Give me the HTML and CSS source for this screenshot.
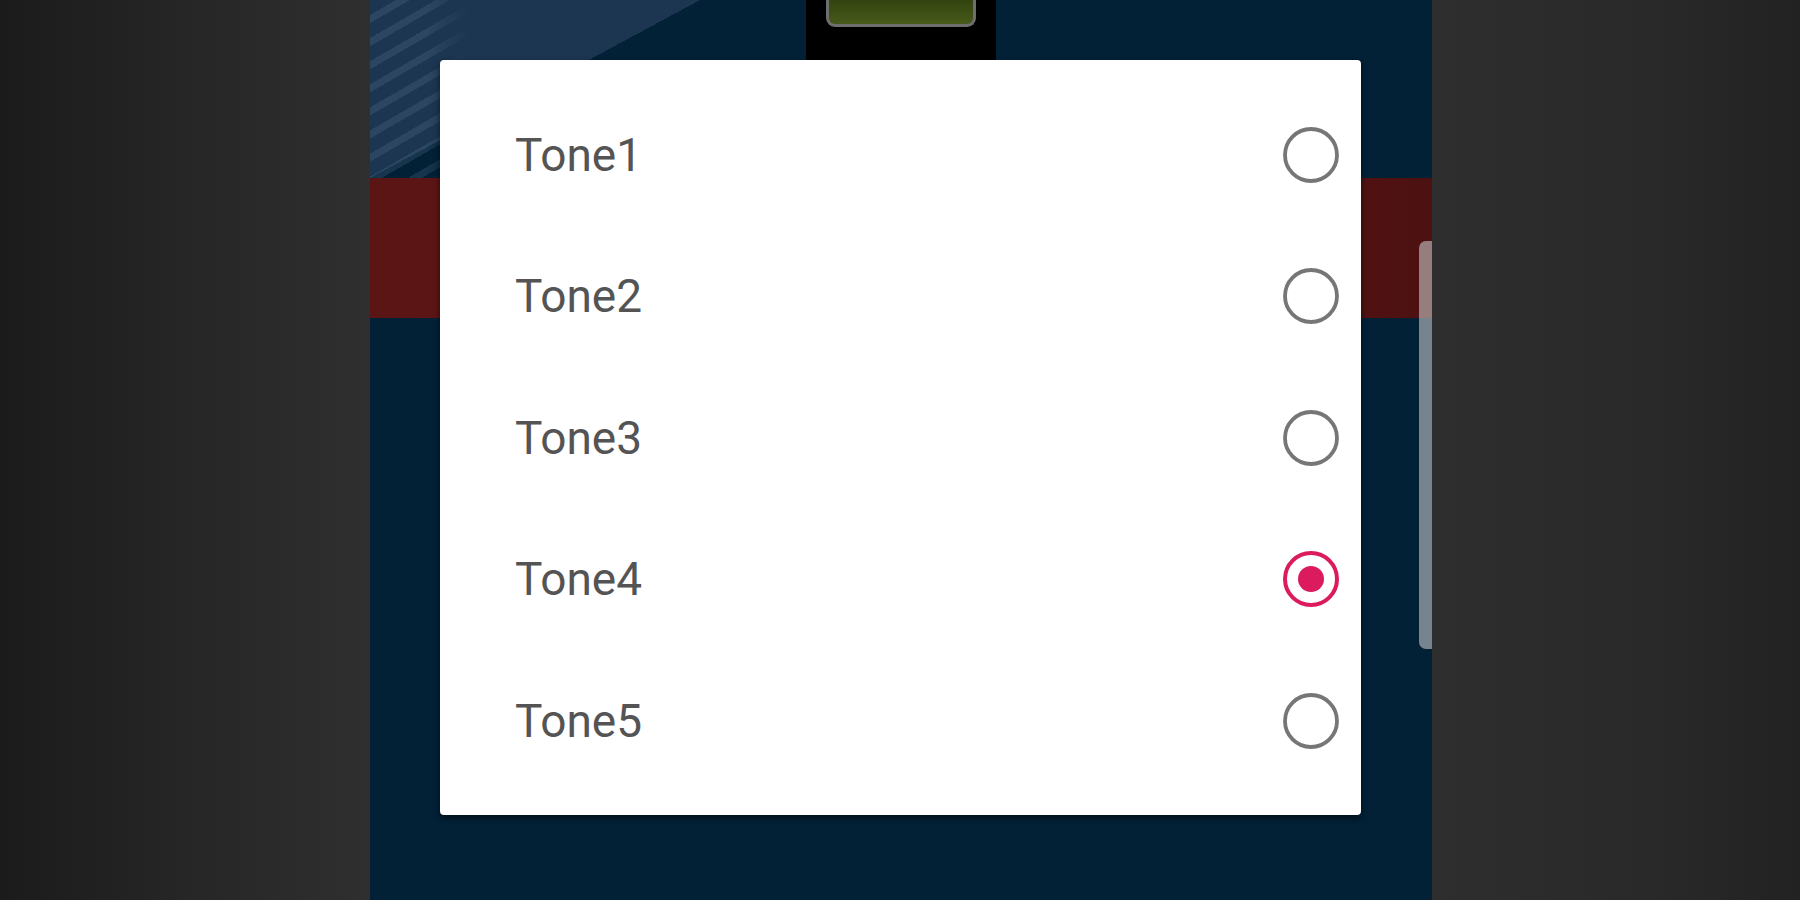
FILE: index.html
```html
<!DOCTYPE html>
<html lang="en">
<head>
<meta charset="utf-8">
<title>Tone picker</title>
<link rel="stylesheet" href="styles.css">
</head>
<body>
<div class="screen">
  <div class="side side-left"></div>
  <div class="phone">
    <div class="header">
      <div class="stripes"></div>
      <div class="camera"><div class="lens"></div></div>
    </div>
    <div class="band"></div>
    <div class="rest"></div>
    <div class="scrollbar"></div>
    <div class="dialog">
      <div class="row"><span class="label">Tone1</span>
        <svg class="radio" viewBox="0 0 60 60"><circle cx="30" cy="30" r="26" fill="none" stroke="#767676" stroke-width="3.8"/></svg></div>
      <div class="row"><span class="label">Tone2</span>
        <svg class="radio" viewBox="0 0 60 60"><circle cx="30" cy="30" r="26" fill="none" stroke="#767676" stroke-width="3.8"/></svg></div>
      <div class="row"><span class="label">Tone3</span>
        <svg class="radio" viewBox="0 0 60 60"><circle cx="30" cy="30" r="26" fill="none" stroke="#767676" stroke-width="3.8"/></svg></div>
      <div class="row"><span class="label">Tone4</span>
        <svg class="radio" viewBox="0 0 60 60"><circle cx="30" cy="30" r="26" fill="none" stroke="#dc1a5e" stroke-width="4"/><circle cx="30" cy="30" r="13" fill="#dc1a5e"/></svg></div>
      <div class="row"><span class="label">Tone5</span>
        <svg class="radio" viewBox="0 0 60 60"><circle cx="30" cy="30" r="26" fill="none" stroke="#767676" stroke-width="3.8"/></svg></div>
    </div>
  </div>
  <div class="side side-right"></div>
</div>
</body>
</html>
```

FILE: styles.css
```css
html, body {
  margin: 0;
  padding: 0;
  width: 1800px;
  height: 900px;
  overflow: hidden;
  background: #242424;
}

.screen {
  display: flex;
  width: 1800px;
  height: 900px;
}

.side {
  height: 900px;
}

.side-left {
  width: 370px;
  background: linear-gradient(to right, #1b1b1b 0%, #262626 50%, #2f2f2f 100%);
}

.side-right {
  width: 368px;
  background: linear-gradient(to right, #2e2e2e 0%, #292929 60%, #222222 100%);
}

.phone {
  position: relative;
  width: 1062px;
  height: 900px;
  background: #022036;
  display: flex;
  flex-direction: column;
}

.header {
  position: relative;
  height: 178px;
  display: flex;
  justify-content: center;
  background:
    linear-gradient(to bottom right, #1c3550 50%, rgba(28, 53, 80, 0) 50%) 0 0 / 330px 178px no-repeat,
    #022036;
}

.stripes {
  position: absolute;
  left: 0;
  top: 0;
  width: 100px;
  height: 178px;
  background: repeating-linear-gradient(150deg, rgba(255, 255, 255, 0) 0px, rgba(255, 255, 255, 0) 13px, rgba(120, 150, 180, 0.18) 13px, rgba(120, 150, 180, 0.18) 20px);
  -webkit-mask-image: linear-gradient(to right, #000 55%, transparent 100%);
  mask-image: linear-gradient(to right, #000 55%, transparent 100%);
}

.camera {
  width: 190px;
  height: 60px;
  background: #000;
  display: flex;
  justify-content: center;
}

.lens {
  width: 144px;
  height: 24px;
  background: linear-gradient(to bottom, #33430f 0%, #475a1a 100%);
  border: 3px solid #6e6e6e;
  border-top: none;
  border-radius: 0 0 9px 9px;
}

.band {
  height: 140px;
  background: linear-gradient(to right, #5c1515 0%, #561313 60%, #4e1111 100%);
}

.rest {
  flex: 1;
  background: #022036;
}

.scrollbar {
  position: absolute;
  right: 0;
  top: 241px;
  width: 13px;
  height: 408px;
  border-radius: 7px 0 0 7px;
  background: rgba(200, 200, 200, 0.6);
}

.dialog {
  position: absolute;
  left: 70px;
  top: 60px;
  width: 921px;
  height: 755px;
  box-sizing: border-box;
  padding: 24px 20px 23.5px 75px;
  background: #ffffff;
  border-radius: 4px;
  box-shadow: 0 3px 6px rgba(0, 0, 0, 0.55);
  display: flex;
  flex-direction: column;
}

.row {
  height: 141.5px;
  display: flex;
  align-items: center;
  justify-content: space-between;
}

.label {
  font-family: Roboto, "Liberation Sans", Arial, sans-serif;
  font-size: 46px;
  color: #545454;
}

.radio {
  width: 60px;
  height: 60px;
  display: block;
}
```
